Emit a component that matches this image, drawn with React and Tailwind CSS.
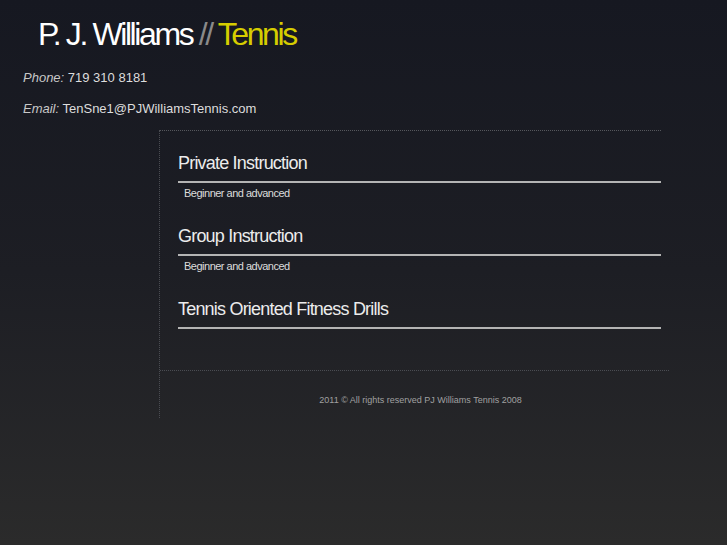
const services = [
  { title: "Private Instruction", note: "Beginner and advanced" },
  { title: "Group Instruction", note: "Beginner and advanced" },
  { title: "Tennis Oriented Fitness Drills", note: null },
];

export default function App() {
  return (
    <div className="min-h-[545px] w-full bg-gradient-to-b from-[#161821] via-[#1d1e24] to-[#2b2b2b] font-['Liberation_Sans',Arial,sans-serif] text-[#e4e4e4]">
      <header className="pl-[38px] pt-[15px]">
        <h1 className="text-[32px] leading-[38px] tracking-[-2.4px] text-white">
          P. J. Williams <span className="text-[#8a8a8a]">//</span>{" "}
          <span className="text-[#d6cd00]">Tennis</span>
        </h1>
      </header>

      <div className="pl-[23px] pt-[16px] text-[13px] leading-[18px] text-[#dddddd]">
        <p>
          <em className="text-[#c8c8c8]">Phone:</em> 719 310 8181
        </p>
        <p className="mt-[13px]">
          <em className="text-[#c8c8c8]">Email:</em> TenSne1@PJWilliamsTennis.com
        </p>
      </div>

      <div className="ml-[159px] mt-[12px] w-[510px] border-l border-dotted border-[#4a4c52]">
        <section className="w-[501px] border-t border-dotted border-[#55575c] pl-[18px] pt-[20px] pb-[41px]">
          {services.map((s) => (
            <div key={s.title}>
              <h2 className="border-b-2 border-[#b4b4b4] pb-[6px] text-[18px] leading-[24px] tracking-[-0.8px] text-[#ececec]">
                {s.title}
              </h2>
              {s.note && (
                <>
                  <p className="h-[21px] pl-[6px] text-[11px] leading-[21px] tracking-[-0.5px] text-[#dcdcdc]">
                    {s.note}
                  </p>
                  <div className="h-[20px]" />
                </>
              )}
            </div>
          ))}
        </section>
        <footer className="h-[48px] border-t border-dotted border-[#4a4c52] pl-[12px] pt-[22px] text-center text-[9px] leading-[14px] text-[#a0a0a0]">
          2011 © All rights reserved PJ Williams Tennis 2008
        </footer>
      </div>
    </div>
  );
}
